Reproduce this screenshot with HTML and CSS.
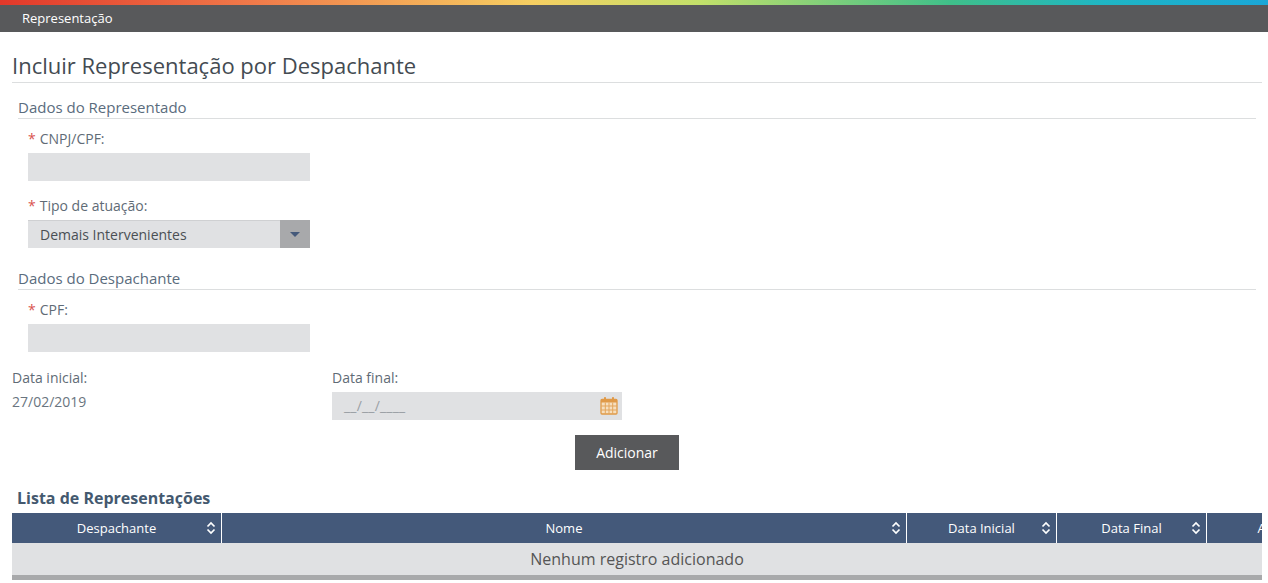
FILE: index.html
```html
<!DOCTYPE html>
<html lang="pt-BR">
<head>
<meta charset="utf-8">
<title>Representação</title>
<link rel="stylesheet" href="styles.css">
</head>
<body>
<div class="rainbow"></div>
<nav class="menubar"><span class="menu-item">Representação</span></nav>
<main class="page">
  <h1 class="page-title">Incluir Representação por Despachante</h1>

  <section class="group">
    <h2 class="group-title">Dados do Representado</h2>
    <div class="field first">
      <label class="label"><span class="req">*</span>CNPJ/CPF:</label>
      <div class="input"></div>
    </div>
    <div class="field second">
      <label class="label"><span class="req">*</span>Tipo de atuação:</label>
      <div class="select">
        <span class="select-value">Demais Intervenientes</span>
        <span class="select-btn"><span class="caret"></span></span>
      </div>
    </div>
  </section>

  <section class="group group-two">
    <h2 class="group-title">Dados do Despachante</h2>
    <div class="field first">
      <label class="label"><span class="req">*</span>CPF:</label>
      <div class="input"></div>
    </div>
  </section>

  <div class="dates">
    <div class="date-start">
      <div class="plain-label">Data inicial:</div>
      <div class="date-value">27/02/2019</div>
    </div>
    <div class="date-end">
      <div class="plain-label">Data final:</div>
      <div class="date-input">
        <span class="mask">__/__/____</span>
        <svg class="cal" width="18" height="19" viewBox="0 0 18 19" aria-hidden="true">
          <rect x="1" y="3.5" width="16" height="14.5" rx="1" fill="#f6dfbf" stroke="#e09a48" stroke-width="1.3"/>
          <rect x="1" y="3.5" width="16" height="3" fill="#e09a48"/>
          <path d="M1 10h16M1 14h16M5.3 6.5V18M9 6.5V18M12.7 6.5V18" stroke="#e3a55c" stroke-width="1" fill="none"/>
          <rect x="4" y="1" width="2" height="4" rx=".8" fill="#e09a48"/>
          <rect x="12" y="1" width="2" height="4" rx=".8" fill="#e09a48"/>
        </svg>
      </div>
    </div>
  </div>

  <div class="actions"><button class="btn" type="button">Adicionar</button></div>

  <h2 class="list-title">Lista de Representações</h2>
  <div class="table-wrap">
    <div class="thead">
      <div class="th c1"><span class="th-text">Despachante</span><svg class="sort" width="10" height="14" viewBox="0 0 10 14"><path d="M1.5 5.5 5 2l3.5 3.5M1.5 8.5 5 12l3.5-3.5" fill="none" stroke="#fff" stroke-width="1.7"/></svg></div>
      <div class="th c2"><span class="th-text">Nome</span><svg class="sort" width="10" height="14" viewBox="0 0 10 14"><path d="M1.5 5.5 5 2l3.5 3.5M1.5 8.5 5 12l3.5-3.5" fill="none" stroke="#fff" stroke-width="1.7"/></svg></div>
      <div class="th c3"><span class="th-text">Data Inicial</span><svg class="sort" width="10" height="14" viewBox="0 0 10 14"><path d="M1.5 5.5 5 2l3.5 3.5M1.5 8.5 5 12l3.5-3.5" fill="none" stroke="#fff" stroke-width="1.7"/></svg></div>
      <div class="th c3"><span class="th-text">Data Final</span><svg class="sort" width="10" height="14" viewBox="0 0 10 14"><path d="M1.5 5.5 5 2l3.5 3.5M1.5 8.5 5 12l3.5-3.5" fill="none" stroke="#fff" stroke-width="1.7"/></svg></div>
      <div class="th c5"><span class="th-text">Ações</span></div>
    </div>
    <div class="empty">Nenhum registro adicionado</div>
    <div class="scrollbar"></div>
  </div>
</main>
</body>
</html>
```
FILE: styles.css
```css
* { box-sizing: border-box; }
html, body { margin: 0; padding: 0; background: #fff; overflow: hidden; }
body { font-family: "Open Sans", "Liberation Sans", sans-serif; font-size: 14px; color: #5b6b7a; height: 583px; }

.rainbow { height: 5px; background: linear-gradient(90deg, #e2382a 0%, #f07a4a 20%, #f6cf62 42%, #c3e06a 55%, #3fbf8a 75%, #1fb6c4 87%, #1aa7d8 100%); }
.menubar { height: 27px; background: #58595b; padding-left: 22px; display: flex; align-items: center; }
.menu-item { color: #fff; font-size: 13px; line-height: 27px; }

.page { padding: 0 6px 0 12px; }
.page-title { margin: 0; height: 51px; padding-top: 17px; font-size: 22px; line-height: 32px; font-weight: 400; color: #444b52; border-bottom: 1px solid #dcdedf; white-space: nowrap; }

.group { padding: 0 6px; }
.group-title { margin: 0; height: 36px; padding-top: 14px; font-size: 15px; line-height: 20px; font-weight: 400; color: #5a6c7d; border-bottom: 1px solid #dcdedf; }
.group-two { margin-top: 6px; }
.field { padding-left: 10px; }
.first { margin-top: 9px; }
.second { margin-top: 14px; }
.label { display: block; height: 25px; font-size: 14px; line-height: 22px; color: #5f6b76; }
.req { color: #d9534f; margin-right: 4px; }
.input { width: 282px; height: 28px; background: #e0e1e3; }
.select { width: 282px; height: 28px; background: #e0e1e3; display: flex; align-items: center; box-shadow: inset 0 1px 0 #cfd0d2; }
.select-value { flex: 1; padding: 1px 0 0 12px; font-size: 14px; color: #4a4f54; line-height: 28px; }
.select-btn { width: 30px; height: 28px; background: #a8a9ab; display: flex; align-items: center; justify-content: center; }
.caret { width: 0; height: 0; border-left: 5px solid transparent; border-right: 5px solid transparent; border-top: 5px solid #44597a; }

.dates { display: flex; margin-top: 16px; }
.date-start { width: 320px; }
.date-end { width: 290px; }
.plain-label { height: 24px; font-size: 14px; line-height: 20px; color: #5f6b76; }
.date-value { font-size: 14px; line-height: 20px; color: #6a7580; }
.date-input { height: 28px; background: #e0e1e3; display: flex; align-items: center; justify-content: space-between; padding: 0 4px 0 12px; }
.mask { font-size: 14px; letter-spacing: .2px; color: #9a9fa5; line-height: 28px; }
.cal { display: block; margin-top: -2px; }

.actions { display: flex; margin-top: 15px; padding-left: 563px; }
.btn { width: 104px; height: 35px; border: 0; padding: 0; background: #58595b; color: #fff; font: 400 14px "Open Sans", "Liberation Sans", sans-serif; }

.list-title { margin: 17px 0 0; padding-left: 5px; height: 26px; font-size: 16px; line-height: 22px; font-weight: 700; color: #44596f; }
.table-wrap { width: 1250px; overflow: hidden; }
.thead { display: flex; width: 1400px; height: 30px; background: #44597a; }
.th { position: relative; height: 30px; flex: none; display: flex; align-items: center; color: #fff; font-size: 13px; font-weight: 500; border-right: 1px solid #fff; }
.th-text { flex: 1; text-align: center; }
.sort { position: absolute; right: 5px; top: 8px; }
.c1 { width: 210px; }
.c2 { width: 685px; }
.c3 { width: 150px; }
.c5 { width: 137px; border-right: 0; }
.empty { height: 32px; background: #e0e1e3; text-align: center; font-size: 16px; line-height: 32px; color: #555; }
.scrollbar { height: 5px; background: #a8a9ab; }
```
